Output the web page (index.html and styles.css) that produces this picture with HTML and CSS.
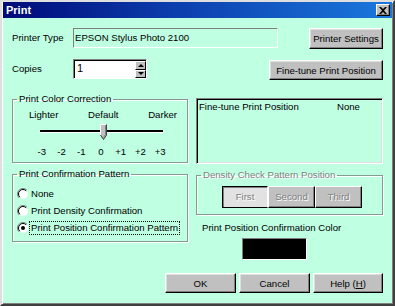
FILE: index.html
```html
<!DOCTYPE html>
<html lang="en">

<head>
  <meta charset="UTF-8">
  <title>Print</title>
  <link rel="stylesheet" href="styles.css">
</head>

<body>
  <div class="window">
    <div class="titlebar">
      <span class="title">Print</span>
      <span class="close">
        <svg width="8" height="7" viewBox="0 0 8 7">
          <path d="M0 0 L2 0 L4 2 L6 0 L8 0 L5 3.5 L8 7 L6 7 L4 5 L2 7 L0 7 L3 3.5 Z" fill="#000"/>
        </svg>
      </span>
    </div>

    <div class="content">
      <div class="row row-type">
        <span class="label">Printer Type</span>
        <div class="field">EPSON Stylus Photo 2100</div>
        <button class="btn btn-settings">Printer Settings</button>
      </div>

      <div class="row row-copies">
        <span class="label">Copies</span>
        <div class="spinner">
          <div class="spin-input">1</div>
          <div class="spin-buttons">
            <span class="spin-btn"><i class="arrow-up"></i></span>
            <span class="spin-btn"><i class="arrow-down"></i></span>
          </div>
        </div>
        <button class="btn btn-finetune">Fine-tune Print Position</button>
      </div>

      <div class="columns">
        <div class="col-left">
          <fieldset class="group group-color">
            <legend>Print Color Correction</legend>
            <div class="slider">
              <div class="slider-labels">
                <span>Lighter</span>
                <span>Default</span>
                <span>Darker</span>
              </div>
              <svg class="slider-track" width="148" height="17" viewBox="0 0 148 17">
                <rect x="11" y="6" width="123" height="2" fill="#000"/>
                <rect x="11" y="8" width="123" height="1" fill="#fff"/>
                <polygon points="71,0 78,0 78,11 74.5,16 71,11" fill="#c0c0c0"/>
                <polyline points="71.5,11 71.5,0.5 77.5,0.5" fill="none" stroke="#fff"/>
                <polyline points="77.5,0.5 77.5,11 74.5,15.5 71.5,11" fill="none" stroke="#404040"/>
                <polyline points="76.5,1.5 76.5,10.5 74.5,13.5" fill="none" stroke="#808080"/>
              </svg>
              <div class="slider-ticks">
                <span>-3</span><span>-2</span><span>-1</span><span>0</span><span>+1</span><span>+2</span><span>+3</span>
              </div>
            </div>
          </fieldset>

          <fieldset class="group group-confirm">
            <legend>Print Confirmation Pattern</legend>
            <div class="radio-row">
              <svg class="radio" width="12" height="12" viewBox="0 0 12 12">
                <circle cx="6" cy="6" r="5" fill="#fff"/>
                <path d="M2.1 9.9 A5.5 5.5 0 0 1 9.9 2.1" fill="none" stroke="#808080"/>
                <path d="M2.8 9.2 A4.5 4.5 0 0 1 9.2 2.8" fill="none" stroke="#000"/>
              </svg>
              <span class="radio-label">None</span>
            </div>
            <div class="radio-row">
              <svg class="radio" width="12" height="12" viewBox="0 0 12 12">
                <circle cx="6" cy="6" r="5" fill="#fff"/>
                <path d="M2.1 9.9 A5.5 5.5 0 0 1 9.9 2.1" fill="none" stroke="#808080"/>
                <path d="M2.8 9.2 A4.5 4.5 0 0 1 9.2 2.8" fill="none" stroke="#000"/>
              </svg>
              <span class="radio-label">Print Density Confirmation</span>
            </div>
            <div class="radio-row">
              <svg class="radio" width="12" height="12" viewBox="0 0 12 12">
                <circle cx="6" cy="6" r="5" fill="#fff"/>
                <path d="M2.1 9.9 A5.5 5.5 0 0 1 9.9 2.1" fill="none" stroke="#808080"/>
                <path d="M2.8 9.2 A4.5 4.5 0 0 1 9.2 2.8" fill="none" stroke="#000"/>
                <circle cx="6" cy="6" r="2" fill="#000"/>
              </svg>
              <span class="radio-label focused">Print Position Confirmation Pattern</span>
            </div>
          </fieldset>
        </div>

        <div class="col-right">
          <div class="listbox">
            <span class="listbox-name">Fine-tune Print Position</span>
            <span>None</span>
          </div>

          <fieldset class="group group-density">
            <legend>Density Check Pattern Position</legend>
            <div class="density-buttons">
              <span class="dbtn pressed">First</span>
              <span class="dbtn">Second</span>
              <span class="dbtn">Third</span>
            </div>
          </fieldset>

          <div class="color-label">Print Position Confirmation Color</div>
          <div class="swatch"></div>
        </div>
      </div>

      <div class="footer">
        <button class="btn btn-ok">OK</button>
        <button class="btn btn-cancel">Cancel</button>
        <button class="btn btn-help">Help (<u>H</u>)</button>
      </div>
    </div>
  </div>
</body>

</html>
```

FILE: styles.css
```css
body {
  margin: 0;
  overflow: hidden;
  font-family: "Liberation Sans", Arial, sans-serif;
  font-size: 9.6px;
  line-height: 12px;
  color: #000;
}

.window {
  width: 395px;
  height: 306px;
  box-sizing: border-box;
  background-color: #bfffe2;
  border: 2px solid;
  border-color: #dfdfdf #404040 #404040 #dfdfdf;
  box-shadow: inset 1px 1px 0 #fff, inset -1px -1px 0 #808080;
  padding: 0 1px 1px 1px;
}

.titlebar {
  height: 16px;
  display: flex;
  align-items: center;
  justify-content: space-between;
  padding: 0 2px 0 3px;
  background: linear-gradient(to right, #000a78, #0c3fae 45%, #1a78dc);
}

.title {
  color: #fff;
  font-weight: bold;
  font-size: 11px;
}

.close {
  width: 14px;
  height: 12px;
  box-sizing: border-box;
  display: flex;
  align-items: center;
  justify-content: center;
  background-color: #c0c0c0;
  border: 1px solid;
  border-color: #fff #000 #000 #fff;
  box-shadow: inset -1px -1px 0 #808080;
}

.content {
  padding: 0 9px;
}

.row {
  display: flex;
  align-items: flex-start;
}

.row-type {
  margin-top: 10px;
}

.row-copies {
  margin-top: 10px;
}

.label {
  width: 61px;
  flex-shrink: 0;
  line-height: 20px;
}

.field {
  width: 205px;
  height: 20px;
  box-sizing: border-box;
  padding-left: 1px;
  line-height: 18px;
  border: 1px solid;
  border-color: #808080 #fff #fff #808080;
}

.btn {
  font-family: "Liberation Sans", Arial, sans-serif;
  font-size: 9.6px;
  color: #000;
  height: 20px;
  padding: 0;
  box-sizing: border-box;
  background-color: #c0c0c0;
  border: 1px solid;
  border-color: #fff #000 #000 #fff;
  box-shadow: inset -1px -1px 0 #808080, inset 1px 1px 0 #dfdfdf;
}

.btn-settings {
  margin-left: auto;
  width: 74px;
  height: 21px;
}

.btn-finetune {
  margin-left: auto;
  margin-top: 1px;
  width: 114px;
}

.spinner {
  display: flex;
  width: 74px;
  height: 20px;
  box-sizing: border-box;
  border: 1px solid;
  border-color: #808080 #fff #fff #808080;
  box-shadow: inset 1px 1px 0 #000;
  background-color: #fff;
}

.spin-input {
  flex: 1;
  padding: 1px 0 0 3px;
  font-size: 11px;
  line-height: 14px;
}

.spin-buttons {
  width: 11px;
  display: flex;
  flex-direction: column;
  padding: 1px 0 0 0;
}

.spin-btn {
  flex: 1;
  display: flex;
  align-items: center;
  justify-content: center;
  background-color: #c0c0c0;
  border: 1px solid;
  border-color: #fff #000 #000 #fff;
}

.arrow-up {
  border-left: 3px solid transparent;
  border-right: 3px solid transparent;
  border-bottom: 3px solid #000;
}

.arrow-down {
  border-left: 3px solid transparent;
  border-right: 3px solid transparent;
  border-top: 3px solid #000;
}

.columns {
  display: flex;
  gap: 8px;
  margin-top: 13px;
}

.col-left {
  width: 176px;
}

.col-right {
  width: 187px;
}

.group {
  margin: 0;
  min-width: 0;
  padding: 0 4px;
  border: 1px solid #859a90;
  box-shadow: 1px 1px 0 #fff, inset 1px 1px 0 #fff;
}

.group legend {
  padding: 0 2px;
  line-height: 12px;
}

.group-color {
  padding-bottom: 4px;
}

.slider {
  width: 148px;
  margin-left: 12px;
}

.slider-labels {
  display: flex;
  justify-content: space-between;
  margin-top: 4px;
}

.slider-track {
  display: block;
  margin-top: 3px;
}

.slider-ticks {
  display: grid;
  grid-template-columns: repeat(7, 1fr);
  width: 138px;
  margin: 5px 0 0 3px;
  text-align: center;
}

.group-confirm {
  margin-top: 5px;
  padding-top: 5px;
  padding-bottom: 5px;
}

.radio-row {
  display: flex;
  align-items: center;
  height: 17px;
}

.radio {
  flex-shrink: 0;
}

.radio-label {
  padding: 0 1px;
  border: 1px dotted transparent;
  white-space: nowrap;
}

.radio-label.focused {
  border-color: #000;
}

.listbox {
  display: flex;
  margin-top: 5px;
  height: 66px;
  box-sizing: border-box;
  padding: 2px 2px;
  border: 1px solid;
  border-color: #808080 #fff #fff #808080;
  box-shadow: inset 1px 1px 0 #000, inset -1px -1px 0 #dfdfdf;
}

.listbox-name {
  width: 138px;
}

.group-density {
  margin-top: 5px;
  padding-top: 5px;
  padding-bottom: 6px;
}

.group-density legend {
  color: #808080;
  text-shadow: 1px 1px 0 #fff;
}

.density-buttons {
  display: flex;
  margin-left: 21px;
}

.dbtn {
  width: 47px;
  height: 22px;
  box-sizing: border-box;
  display: flex;
  align-items: center;
  justify-content: center;
  background-color: #c0c0c0;
  color: #808080;
  text-shadow: 1px 1px 0 #fff;
  border: 1px solid;
  border-color: #fff #000 #000 #fff;
  box-shadow: inset -1px -1px 0 #808080;
}

.dbtn.pressed {
  width: 46px;
  background-color: #e2e2e2;
  border-color: #000 #fff #000 #000;
  box-shadow: inset 1px 1px 0 #808080;
}

.color-label {
  margin-top: 7px;
  padding-left: 6px;
}

.swatch {
  width: 65px;
  height: 22px;
  box-sizing: border-box;
  margin: 4px 0 0 46px;
  background-color: #000;
  border: 1px solid;
  border-color: #808080 #fff #fff #808080;
}

.footer {
  display: flex;
  justify-content: flex-end;
  gap: 3px;
  margin-top: 13px;
}

.btn-ok,
.btn-cancel {
  width: 71px;
}

.btn-help {
  width: 70px;
}
```
